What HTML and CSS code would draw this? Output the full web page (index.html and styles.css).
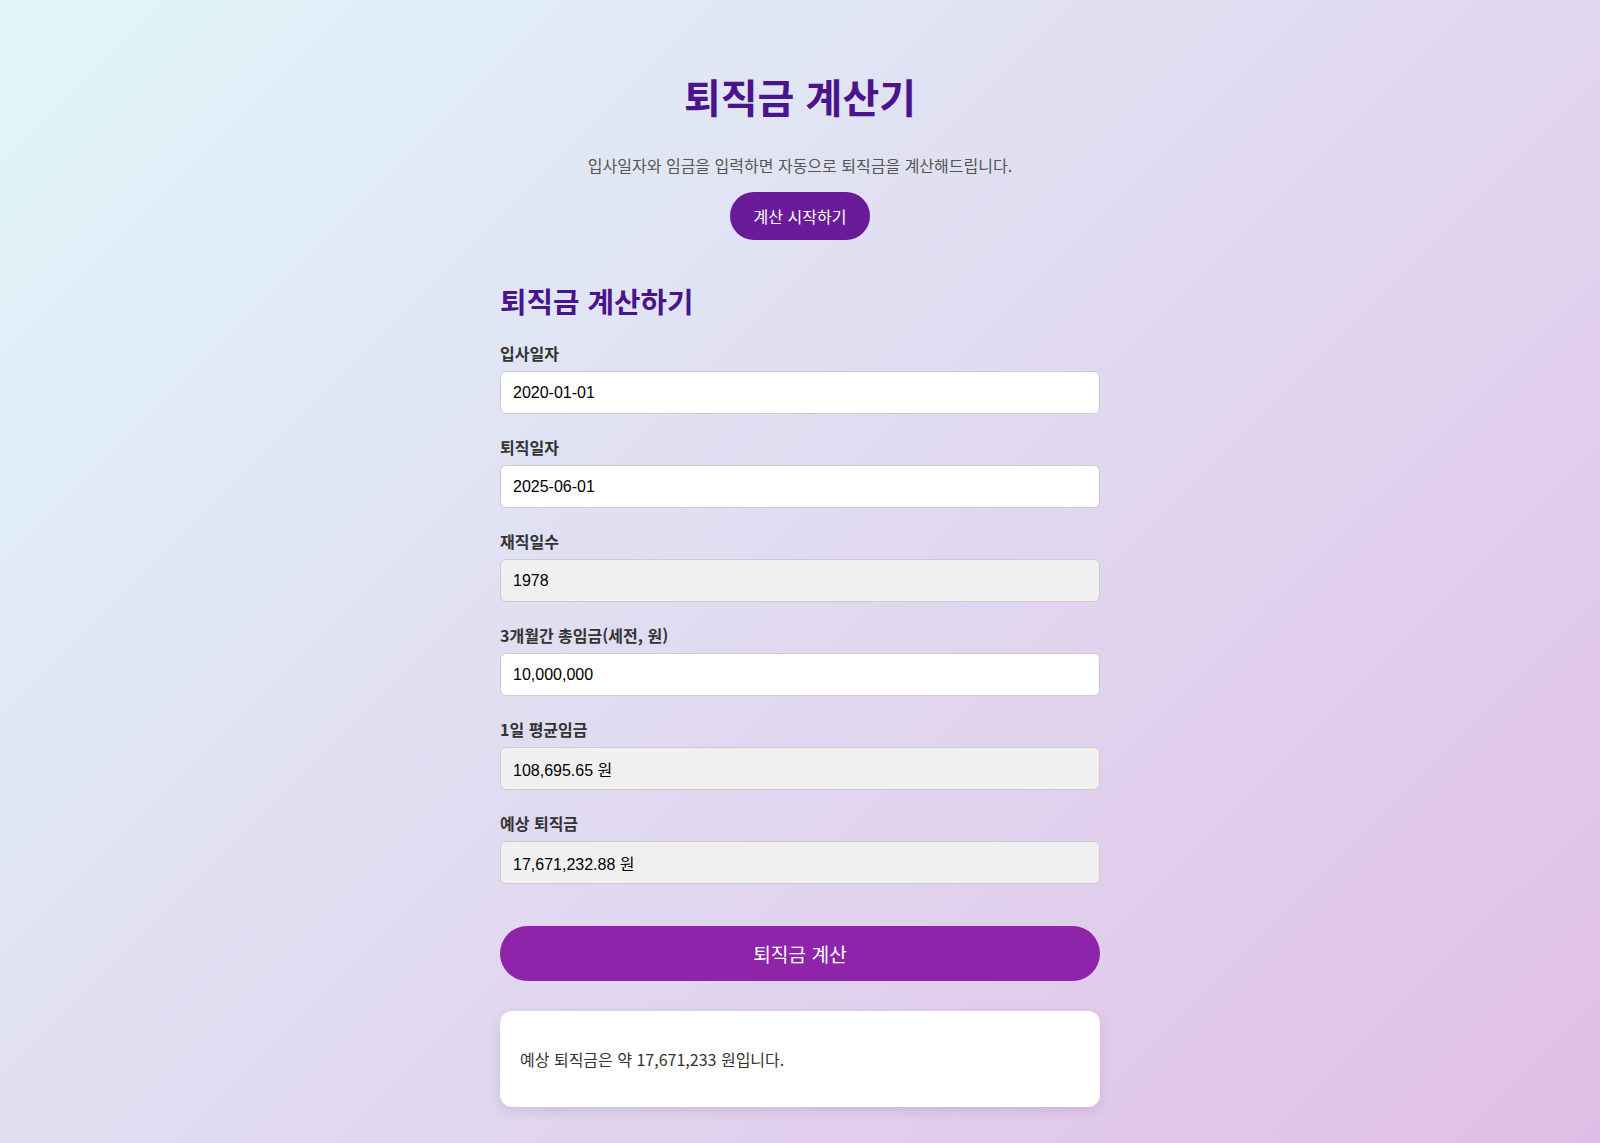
FILE: index.html
```html
<!DOCTYPE html>
<html lang="ko">
<head>
<meta charset="utf-8">
<title>퇴직금 계산기</title>
<link rel="stylesheet" href="styles.css">
</head>
<body>
<main class="page">
  <header class="hero">
    <h1 class="hero-title">퇴직금 계산기</h1>
    <p class="hero-sub">입사일자와 임금을 입력하면 자동으로 퇴직금을 계산해드립니다.</p>
    <button class="start-btn" type="button">계산 시작하기</button>
  </header>

  <section class="calc">
    <h2 class="calc-title">퇴직금 계산하기</h2>
    <div class="field">
      <label class="field-label">입사일자</label>
      <input class="field-input" type="text" value="2020-01-01">
    </div>
    <div class="field">
      <label class="field-label">퇴직일자</label>
      <input class="field-input" type="text" value="2025-06-01">
    </div>
    <div class="field">
      <label class="field-label">재직일수</label>
      <input class="field-input readonly" type="text" value="1978" readonly>
    </div>
    <div class="field">
      <label class="field-label">3개월간 총임금(세전, 원)</label>
      <input class="field-input" type="text" value="10,000,000">
    </div>
    <div class="field">
      <label class="field-label">1일 평균임금</label>
      <input class="field-input readonly" type="text" value="108,695.65 원" readonly>
    </div>
    <div class="field">
      <label class="field-label">예상 퇴직금</label>
      <input class="field-input readonly" type="text" value="17,671,232.88 원" readonly>
    </div>
    <button class="calc-btn" type="button">퇴직금 계산</button>
    <div class="result">
      <p class="result-text">예상 퇴직금은 약 17,671,233 원입니다.</p>
    </div>
  </section>
</main>
</body>
</html>
```

FILE: styles.css
```css
html, body {
  margin: 0;
  padding: 0;
}

body {
  min-height: 100vh;
  background: linear-gradient(135deg, #e0f7fa 0%, #e1bee7 100%);
  font-family: "Noto Sans CJK KR", "Noto Sans", sans-serif;
  color: #333;
}

.page {
  display: flex;
  flex-direction: column;
  align-items: center;
  padding: 74px 0 36px;
}

.hero {
  display: flex;
  flex-direction: column;
  align-items: center;
}

.hero-title {
  margin: 0;
  font-size: 40px;
  line-height: 44px;
  font-weight: 700;
  color: #4a148c;
}

.hero-sub {
  margin: 36px 0 0;
  font-size: 16px;
  line-height: 22px;
  color: #555;
}

.start-btn {
  margin-top: 16px;
  height: 48px;
  padding: 0 24px;
  border: none;
  border-radius: 24px;
  background: #6a1b9a;
  color: #fff;
  font-family: "Noto Sans CJK KR", sans-serif;
  font-size: 16px;
  line-height: 20px;
  cursor: pointer;
}

.calc {
  width: 600px;
  margin-top: 44px;
  display: flex;
  flex-direction: column;
}

.calc-title {
  margin: 0 0 26px;
  font-size: 28.8px;
  line-height: 34px;
  font-weight: 700;
  color: #4a148c;
}

.field {
  display: flex;
  flex-direction: column;
  margin-bottom: 24px;
}

.field-label {
  font-size: 16px;
  line-height: 19px;
  font-weight: 700;
  color: #333;
  margin-bottom: 8px;
}

.field-input {
  box-sizing: border-box;
  width: 100%;
  height: 43px;
  padding: 0 12px;
  border: 1px solid #ccc;
  border-radius: 6px;
  background: #fff;
  font-family: "Liberation Sans", "Noto Sans CJK KR", sans-serif;
  font-size: 16px;
  color: #000;
  outline: none;
}

.field-input.readonly {
  background: #f0f0f0;
}

.calc-btn {
  margin-top: 18px;
  height: 55px;
  width: 100%;
  border: none;
  border-radius: 28px;
  background: #8e24aa;
  color: #fff;
  font-family: "Noto Sans CJK KR", sans-serif;
  font-size: 19.2px;
  line-height: 24px;
  cursor: pointer;
}

.result {
  margin-top: 30px;
  padding: 20px;
  background: #fff;
  border-radius: 12px;
  box-shadow: 0 4px 12px rgba(0, 0, 0, 0.1);
}

.result-text {
  margin: 16px 0;
  font-size: 16px;
  line-height: 24px;
  color: #333;
}
```
